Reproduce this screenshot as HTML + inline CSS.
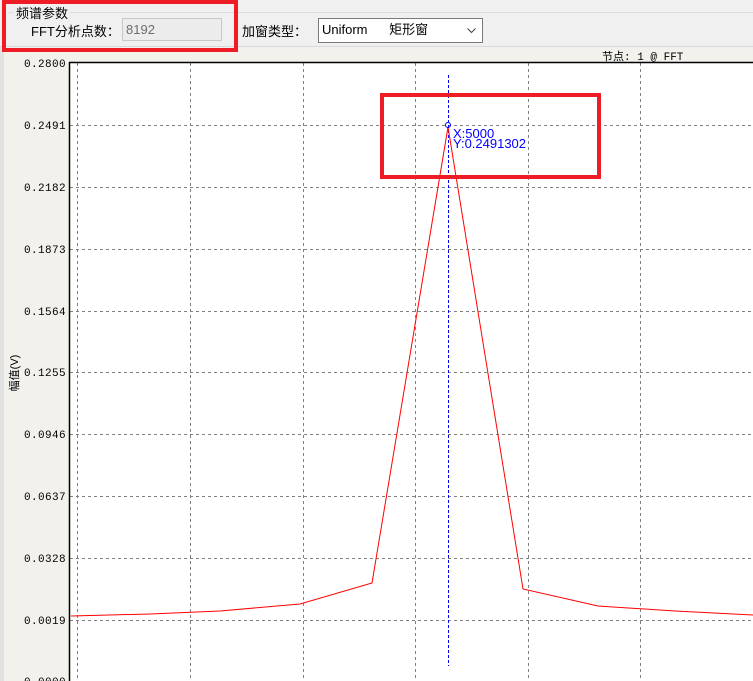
<!DOCTYPE html>
<html><head><meta charset="utf-8"><style>
body{margin:0;width:753px;height:681px;overflow:hidden;background:#f0f0f0;position:relative;font-family:"Liberation Sans","Noto Sans CJK SC",sans-serif;}
.a{position:absolute}
</style></head><body>
<div class="a" style="left:8px;top:12px;width:745px;height:1px;background:#dcdcdc"></div>
<div class="a" style="left:14px;top:3px;font-size:13px;background:#f0f0f0;padding:0 2px;color:#000">频谱参数</div>
<div class="a" style="left:31px;top:21px;font-size:13px">FFT分析点数：</div>
<div class="a" style="left:122px;top:18px;width:100px;height:23px;border:1px solid #c8c8c8;background:#ececec;color:#6d6d6d;font-size:13px;line-height:21px;padding-left:3px;box-sizing:border-box">8192</div>
<div class="a" style="left:242px;top:21px;font-size:13px">加窗类型：</div>
<div class="a" style="left:318px;top:18px;width:165px;height:25px;border:1px solid #7a7a7a;background:#fff;box-sizing:border-box;font-size:13px;line-height:22px;padding-left:3px">Uniform&nbsp;&nbsp;&nbsp;&nbsp;&nbsp;&nbsp;矩形窗<svg style="position:absolute;right:6px;top:9px" width="9" height="6"><polyline points="0.5,0.5 4.5,4.5 8.5,0.5" fill="none" stroke="#444"/></svg></div>
<div class="a" style="left:0;top:46px;width:753px;height:1px;background:#d8d8d8"></div>
<div class="a" style="left:0;top:47px;width:753px;height:634px;background:#f2f1ec"></div>
<div class="a" style="left:0;top:47px;width:4px;height:634px;background:#e2e2e2"></div>
<div class="a" style="left:602px;top:48px;font-family:'Liberation Mono','Noto Sans CJK SC',monospace;font-size:11px">节点: 1 @ FFT</div>
<svg class="a" style="left:0;top:0" width="753" height="681">
<rect x="70" y="63" width="683" height="620" fill="#fff"/>
<g stroke="#808080" stroke-dasharray="3,3" stroke-width="1">
<line x1="77.5" y1="63" x2="77.5" y2="681"/><line x1="190.5" y1="63" x2="190.5" y2="681"/><line x1="303.5" y1="63" x2="303.5" y2="681"/><line x1="415.5" y1="63" x2="415.5" y2="681"/><line x1="528.5" y1="63" x2="528.5" y2="681"/><line x1="640.5" y1="63" x2="640.5" y2="681"/>
<line x1="70" y1="125.5" x2="753" y2="125.5"/><line x1="70" y1="187.5" x2="753" y2="187.5"/><line x1="70" y1="249.5" x2="753" y2="249.5"/><line x1="70" y1="311.5" x2="753" y2="311.5"/><line x1="70" y1="372.5" x2="753" y2="372.5"/><line x1="70" y1="434.5" x2="753" y2="434.5"/><line x1="70" y1="496.5" x2="753" y2="496.5"/><line x1="70" y1="558.5" x2="753" y2="558.5"/><line x1="70" y1="620.5" x2="753" y2="620.5"/>
</g>
<line x1="69" y1="62.5" x2="753" y2="62.5" stroke="#000" stroke-width="1.5"/>
<line x1="69.5" y1="62" x2="69.5" y2="681" stroke="#000" stroke-width="1.5"/>
<line x1="448.5" y1="75" x2="448.5" y2="666" stroke="#0000ff" stroke-dasharray="3,2"/>
<polyline fill="none" stroke="#ff0000" stroke-width="1" points="71,616 150,614 220,611 300,604 372,583 448,127 523,589 598,606 675,611 753,615"/>
<circle cx="448" cy="125" r="2.5" fill="none" stroke="#0000ff"/>
<text x="453" y="138" font-family="Liberation Sans,sans-serif" font-size="13" fill="#0000ff">X:5000</text>
<text x="453" y="148" font-family="Liberation Sans,sans-serif" font-size="13" fill="#0000ff">Y:0.2491302</text>
<g font-family="Liberation Mono,monospace" font-size="11" fill="#000" text-anchor="end" letter-spacing="0.4">
<text x="66" y="67">0.2800</text><text x="66" y="129">0.2491</text><text x="66" y="191">0.2182</text><text x="66" y="253">0.1873</text><text x="66" y="315">0.1564</text><text x="66" y="376">0.1255</text><text x="66" y="438">0.0946</text><text x="66" y="500">0.0637</text><text x="66" y="562">0.0328</text><text x="66" y="624">0.0019</text><text x="66" y="685">0.0000</text>
</g>
<text transform="translate(18,373) rotate(-90)" text-anchor="middle" font-family="Liberation Sans,Noto Sans CJK SC,sans-serif" font-size="11">幅值(V)</text>
<rect x="4" y="2" width="232" height="48" fill="none" stroke="#ee1c25" stroke-width="4"/>
<rect x="382" y="95" width="217" height="82" fill="none" stroke="#ee1c25" stroke-width="4"/>
</svg>
</body></html>
